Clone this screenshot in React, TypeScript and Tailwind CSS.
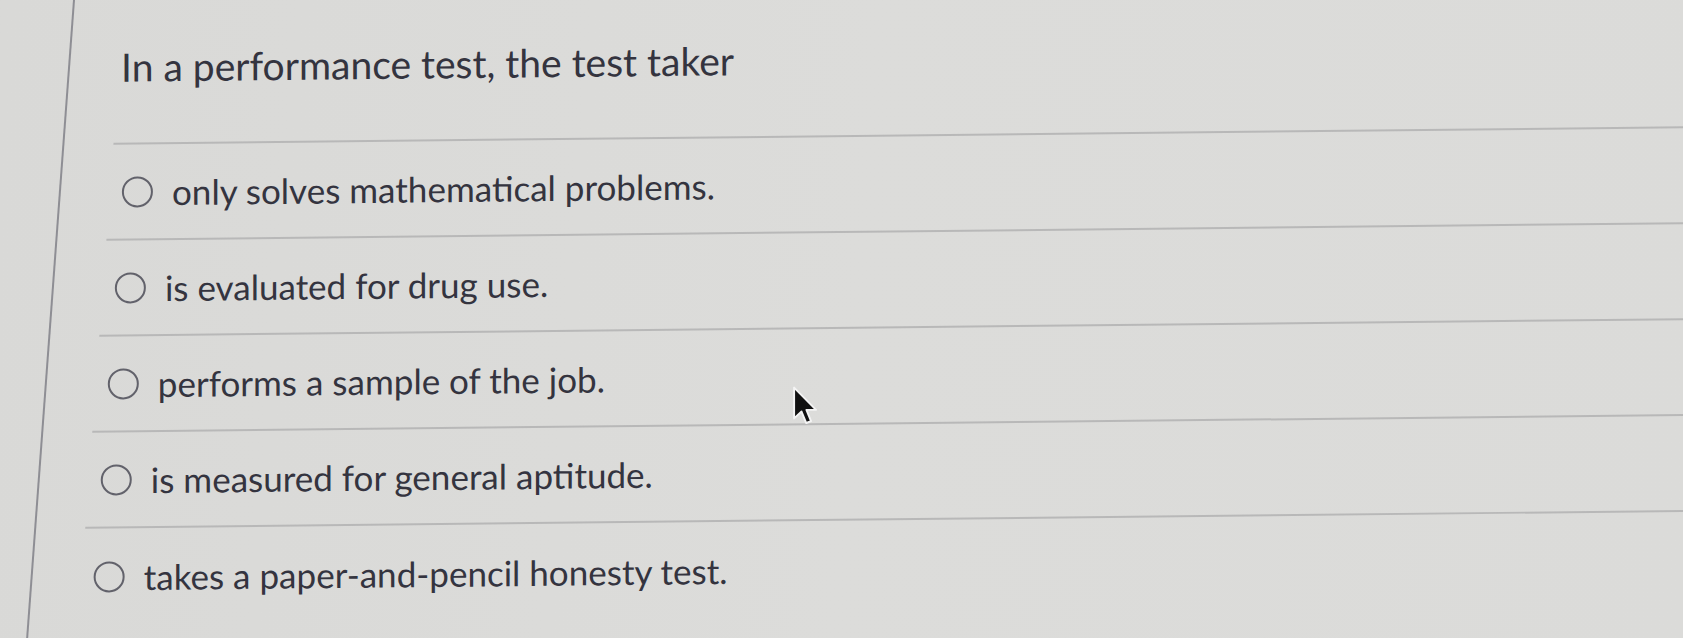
const options = [
  "only solves mathematical problems.",
  "is evaluated for drug use.",
  "performs a sample of the job.",
  "is measured for general aptitude.",
  "takes a paper-and-pencil honesty test.",
];

function Radio() {
  return (
    <span className="block h-[31px] w-[31px] shrink-0 rounded-full border-[2.5px] border-[#62626b] [transform:skewX(4.2deg)]" />
  );
}

function Cursor() {
  return (
    <svg
      className="pointer-events-none absolute left-[792px] top-[385px]"
      width="28"
      height="43"
      viewBox="0 0 20 30"
    >
      <path
        d="M1.5 1.5 L1.5 23.5 L6.8 18.6 L10.2 26.8 L13.6 25.4 L10.3 17.4 L17.2 17.4 Z"
        fill="#111"
        stroke="#f4f4f4"
        strokeWidth="1.4"
        strokeLinejoin="round"
      />
    </svg>
  );
}

export default function App() {
  return (
    <div className="relative h-[638px] w-full overflow-hidden bg-[#dbdbd9] font-['Lato','Liberation_Sans',sans-serif] text-[#34343f]">
      {/* the screen was photographed at a slight angle, hence the skew */}
      <div className="h-[700px] w-[1760px] origin-top-left bg-gradient-to-r from-[#d9d9d7] via-[#dcdcda] to-[#dbdbd9] [transform:skewX(-4.2deg)_skewY(-0.6deg)]">
        <div className="ml-[73px] h-full border-l-2 border-[#8e8e94] pl-[49px]">
          <div className="h-[146px] border-b-2 border-[#b8b8b8] pl-[2px] pt-[45px]">
            <h1 className="inline-block text-[39px] leading-[1.2] [transform:skewX(4.2deg)]">
              In a performance test, the test taker
            </h1>
          </div>
          <ul className="divide-y-2 divide-[#b8b8b8]">
            {options.map((text) => (
              <li
                key={text}
                className="flex h-[96px] items-center gap-[19px] pl-[12px]"
              >
                <Radio />
                <span className="inline-block text-[35px] leading-[1.2] [transform:skewX(4.2deg)]">
                  {text}
                </span>
              </li>
            ))}
          </ul>
        </div>
      </div>
      <Cursor />
    </div>
  );
}
